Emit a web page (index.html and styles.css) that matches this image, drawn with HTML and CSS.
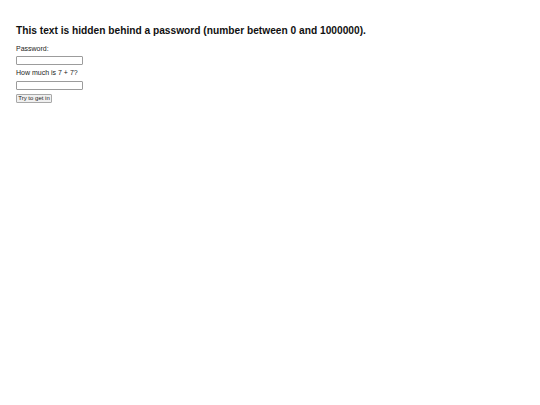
FILE: index.html
```html
<!DOCTYPE html>
<html>
<head>
<meta charset="utf-8">
<link rel="stylesheet" href="styles.css">
</head>
<body>
<div class="page">
  <h2 class="title">This text is hidden behind a password (number between 0 and 1000000).</h2>
  <form class="form">
    <label class="label">Password:</label>
    <input class="field" type="password">
    <label class="label label-second">How much is 7 + 7?</label>
    <input class="field" type="text">
    <button class="btn" type="button">Try to get in</button>
  </form>
</div>
</body>
</html>
```
FILE: styles.css
```css
html, body { margin: 0; padding: 0; background: #fff; }
.page {
  padding: 25px 16px 0 16px;
  font-family: "Liberation Sans", Arial, sans-serif;
  color: #000;
}
.title {
  margin: 0;
  font-size: 10.2px;
  font-weight: bold;
  line-height: 12px;
  color: #111;
}
.form {
  display: flex;
  flex-direction: column;
  align-items: flex-start;
  margin-top: 7px;
}
.label {
  font-size: 7px;
  line-height: 9px;
  margin-bottom: 3px;
  color: #222;
}
.label-second { margin-bottom: 4px; }
.field {
  box-sizing: border-box;
  width: 67px;
  height: 9px;
  margin: 0 0 3px 0;
  padding: 0;
  border: 1px solid #9c9c9c;
  border-radius: 1px;
  background: #fff;
}
.field + .btn { margin-top: 1px; }
.btn {
  box-sizing: border-box;
  height: 9px;
  width: 36px;
  padding: 0;
  font-family: "Liberation Sans", Arial, sans-serif;
  font-size: 6px;
  line-height: 7px;
  border: 1px solid #a8a8a8;
  border-radius: 1px;
  background: #f0f0f0;
  color: #222;
}
```
